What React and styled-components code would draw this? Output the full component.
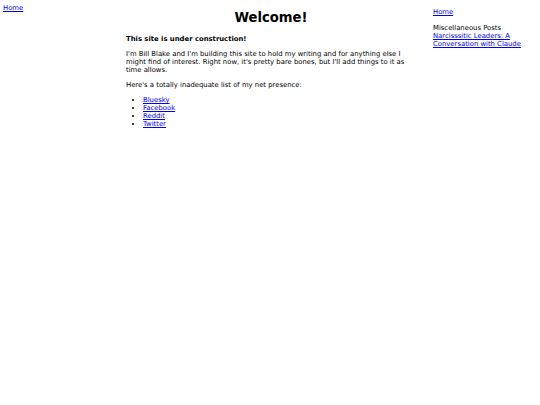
import React from 'react';
import styled, { createGlobalStyle } from 'styled-components';

const GlobalStyle = createGlobalStyle`
  body {
    margin: 0;
    background: #ffffff;
    font-family: "DejaVu Sans", Verdana, sans-serif;
    font-size: 6.85px;
    line-height: 8px;
    color: #000000;
  }
  a {
    color: #0000ee;
  }
`;

const Page = styled.div`
  display: flex;
  align-items: flex-start;
  width: 540px;
  min-height: 405px;
`;

const LeftNav = styled.nav`
  width: 126px;
  padding: 4px 0 0 3px;
  box-sizing: border-box;
  flex-shrink: 0;
`;

const Main = styled.main`
  width: 290px;
  flex-shrink: 0;
`;

const Title = styled.h1`
  font-size: 13.2px;
  line-height: 16px;
  text-align: center;
  margin: 10px 0 9px;
`;

const Text = styled.p`
  margin: 7px 0;
  font-weight: ${(p) => (p.bold ? 'bold' : 'normal')};
`;

const LinkList = styled.ul`
  margin: 7px 0;
  padding-left: 17px;
`;

const Sidebar = styled.aside`
  flex: 1;
  padding: 8px 0 0 17px;
`;

const SideBlock = styled.p`
  margin: 0 0 8px;
`;

const links = ['Bluesky', 'Facebook', 'Reddit', 'Twitter'];

const App = () => (
  <>
    <GlobalStyle />
    <Page>
      <LeftNav>
        <a href='#'>Home</a>
      </LeftNav>
      <Main>
        <Title>Welcome!</Title>
        <Text bold>This site is under construction!</Text>
        <Text>
          I'm Bill Blake and I'm building this site to hold my writing and for anything else I
          might find of interest. Right now, it's pretty bare bones, but I'll add things to it as
          time allows.
        </Text>
        <Text>Here's a totally inadequate list of my net presence:</Text>
        <LinkList>
          {links.map((item) => (
            <li key={item}>
              <a href='#'>{item}</a>
            </li>
          ))}
        </LinkList>
      </Main>
      <Sidebar>
        <SideBlock>
          <a href='#'>Home</a>
        </SideBlock>
        <SideBlock>
          Miscellaneous Posts
          <br />
          <a href='#'>Narcisssitic Leaders: A Conversation with Claude</a>
        </SideBlock>
      </Sidebar>
    </Page>
  </>
);

export default App;
